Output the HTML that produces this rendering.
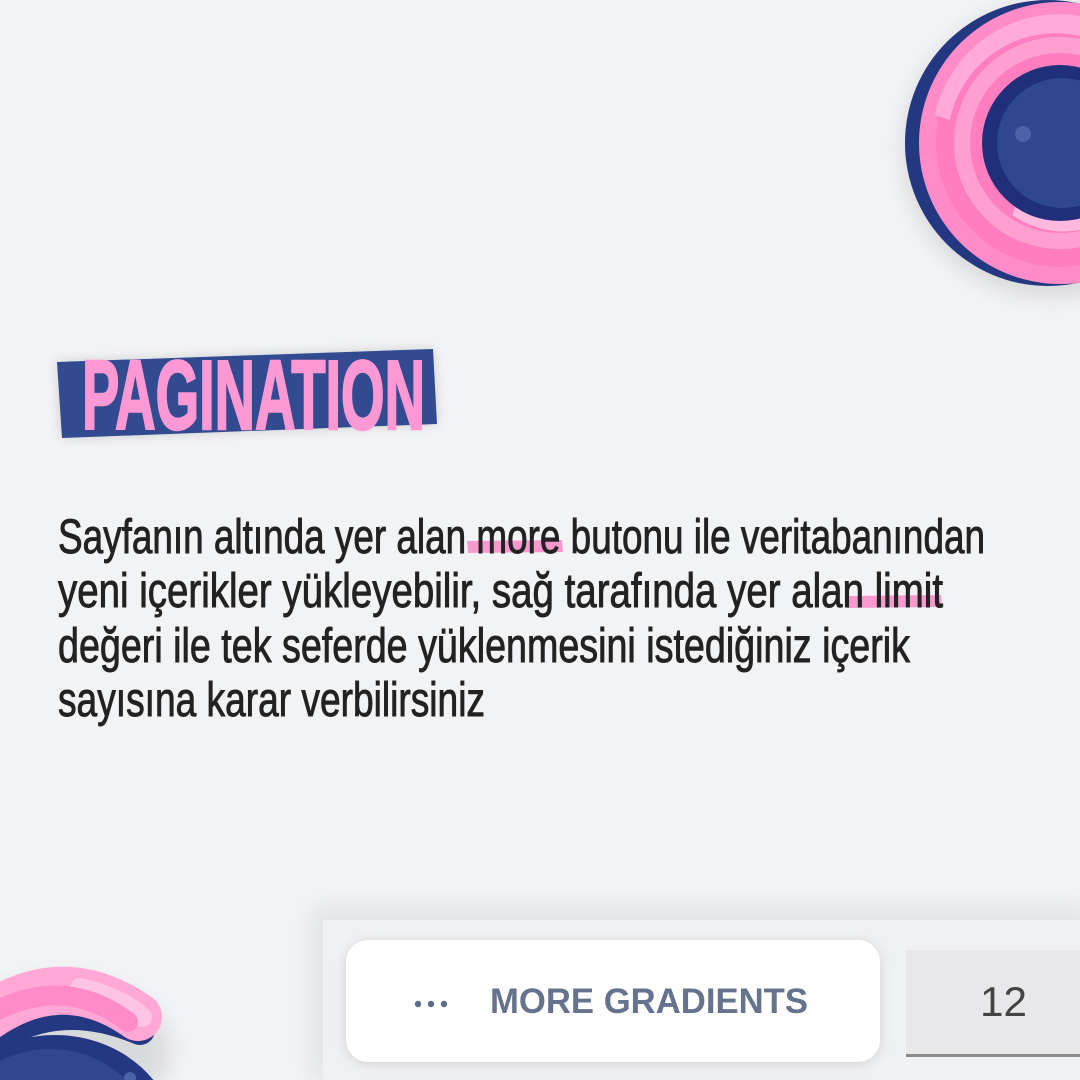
<!DOCTYPE html>
<html><head><meta charset="utf-8"><style>
html,body{margin:0;padding:0}
body{width:1080px;height:1080px;background:#f2f3f5;overflow:hidden;position:relative;font-family:"Liberation Sans",sans-serif}
svg{position:absolute;left:0;top:0;display:block}
</style></head><body>
<svg width="1080" height="1080" viewBox="0 0 1080 1080" overflow="hidden">
<defs>
<filter id="sh" x="-30%" y="-30%" width="160%" height="160%"><feGaussianBlur stdDeviation="12"/></filter>
<filter id="sh2" x="-10%" y="-30%" width="120%" height="160%"><feGaussianBlur stdDeviation="6"/></filter>
</defs>
<circle cx="1050" cy="150" r="145" fill="#000" opacity="0.12" filter="url(#sh)"/>
<circle cx="1048" cy="143" r="143" fill="#243781"/>
<circle cx="1060" cy="143" r="141" fill="#ff8cc8"/>
<circle cx="1060" cy="143" r="124" fill="#ff7ec0"/>
<path d="M935 115 A127 127 0 0 1 1080 16 L1080 36 A108 108 0 0 0 950 120 Z" fill="#ffaad8"/>
<circle cx="1060" cy="143" r="98" fill="none" stroke="#ff9fd0" stroke-width="16"/>
<path d="M1012 215 A90 90 0 0 0 1080 230 L1080 214 A75 75 0 0 1 1018 200 Z" fill="#ffb8de"/>
<circle cx="1060" cy="143" r="78" fill="#1f2f7a"/>
<circle cx="1062" cy="143" r="65" fill="#2f4690"/>
<circle cx="1023" cy="134" r="8" fill="#4a62a8"/>
<polygon points="57,362 433,349 437,424 62,438" fill="#000" opacity="0.15" filter="url(#sh2)"/>
<polygon points="57,362 433,349 437,424 62,438" fill="#324a8f"/>
<text x="82" y="429" font-size="98" font-weight="bold" fill="#fc98d3" stroke="#fc98d3" stroke-width="2.5" textLength="343" lengthAdjust="spacingAndGlyphs" font-family="Liberation Sans Narrow, Liberation Sans, sans-serif">PAGINATION</text>
<path d="M467 541 L562 540 L563 552 L468 553 Z" fill="#f89ad0"/>
<path d="M846 596 L941 595 L942 607 L847 608 Z" fill="#f89ad0"/>
<g font-size="48" fill="#222" stroke="#222" stroke-width="0.9" font-family="Liberation Sans Narrow, Liberation Sans, sans-serif">
<text x="58" y="553" textLength="927" lengthAdjust="spacingAndGlyphs">Sayfanın altında yer alan more butonu ile veritabanından</text>
<text x="58" y="607" textLength="885" lengthAdjust="spacingAndGlyphs">yeni içerikler yükleyebilir, sağ tarafında yer alan limit</text>
<text x="58" y="662" textLength="852" lengthAdjust="spacingAndGlyphs">değeri ile tek seferde yüklenmesini istediğiniz içerik</text>
<text x="58" y="716" textLength="427" lengthAdjust="spacingAndGlyphs">sayısına karar verbilirsiniz</text>
</g>
<rect x="310" y="905" width="780" height="175" fill="#000" opacity="0.06" filter="url(#sh)"/>
<rect x="323" y="920" width="757" height="160" fill="#f0f1f3"/>
<rect x="346" y="942" width="534" height="122" rx="22" fill="#000" opacity="0.12" filter="url(#sh2)"/>
<rect x="346" y="940" width="534" height="122" rx="22" fill="#fff"/>
<circle cx="418" cy="1004" r="3.2" fill="#5e6b85"/>
<circle cx="431" cy="1004" r="3.2" fill="#5e6b85"/>
<circle cx="444" cy="1004" r="3.2" fill="#5e6b85"/>
<text x="490" y="1013" font-size="35" font-weight="bold" fill="#66738e" textLength="318" lengthAdjust="spacingAndGlyphs" font-family="Liberation Sans Narrow, Liberation Sans, sans-serif">MORE GRADIENTS</text>
<rect x="906" y="950" width="174" height="106" fill="#e8e8ea"/>
<rect x="906" y="1054" width="174" height="3" fill="#8a8a8a"/>
<text x="980" y="1016" font-size="42" fill="#444" textLength="47" lengthAdjust="spacingAndGlyphs" font-family="Liberation Sans Narrow, Liberation Sans, sans-serif">12</text>
<ellipse cx="60" cy="1050" rx="110" ry="70" fill="#000" opacity="0.1" filter="url(#sh)"/>
<ellipse cx="55" cy="1145" rx="122" ry="110" fill="#243781"/>
<ellipse cx="50" cy="1155" rx="108" ry="106" fill="#2f4690"/>
<path d="M-20 1050 Q50 992 140 1030" fill="none" stroke="#243781" stroke-width="30" stroke-linecap="round"/>
<path d="M-20 1022 Q60 962 138 1017" fill="none" stroke="#ffa8d5" stroke-width="48" stroke-linecap="round"/>
<path d="M80 988 Q120 997 142 1017" fill="none" stroke="#ffc4e5" stroke-width="20" stroke-linecap="round"/>
<path d="M-20 1020 Q60 970 128 1022" fill="none" stroke="#ff8cc8" stroke-width="20" stroke-linecap="round"/>
<circle cx="130" cy="1078" r="6" fill="#4a62a8"/>
</svg>
</body></html>
